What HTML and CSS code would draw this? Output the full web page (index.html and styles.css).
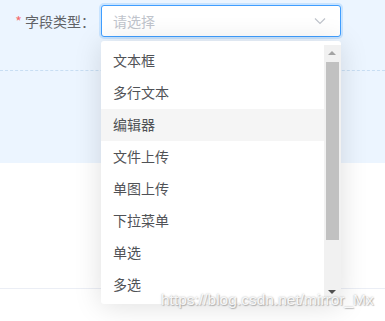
FILE: index.html
```html
<!DOCTYPE html>
<html lang="zh-CN">

<head>
    <meta charset="UTF-8" />
    <meta name="viewport" content="width=device-width, initial-scale=1.0" />
    <link rel="stylesheet" href="styles.css">
    <title>字段类型</title>
</head>

<body>
    <section class="panel">
        <div class="form-row">
            <label class="label"><span class="star">*</span> 字段类型：</label>
            <div class="select">
                <span class="placeholder">请选择</span>
                <svg class="arrow" width="12" height="8" viewBox="0 0 12 8">
                    <path d="M1 1.5 L6 6.5 L11 1.5" fill="none" stroke="#c0c4cc" stroke-width="1.2" />
                </svg>
            </div>
        </div>
        <hr class="dashed" />
    </section>
    <section class="body">
        <hr class="line" />
    </section>

    <div class="dropdown">
        <ul class="options">
            <li>文本框</li>
            <li>多行文本</li>
            <li class="hover">编辑器</li>
            <li>文件上传</li>
            <li>单图上传</li>
            <li>下拉菜单</li>
            <li>单选</li>
            <li>多选</li>
        </ul>
        <div class="scrollbar">
            <div class="btn-up"></div>
            <div class="thumb"></div>
            <div class="btn-down"></div>
        </div>
    </div>

    <div class="watermark">https://blog.csdn.net/mirror_Mx</div>
</body>

</html>
```

FILE: styles.css
```css
* {
    margin: 0;
    padding: 0;
    box-sizing: border-box;
}

body {
    width: 385px;
    height: 321px;
    overflow: hidden;
    position: relative;
    background-color: #ffffff;
    font-family: "Noto Sans CJK SC", "Liberation Sans", sans-serif;
    font-size: 14px;
}

section.panel {
    height: 163px;
    background-color: #ecf5ff;
    padding-top: 5px;
}

.form-row {
    display: flex;
    align-items: center;
}

.label {
    width: 101px;
    padding-right: 6px;
    text-align: right;
    color: #606266;
    line-height: 32px;
}

.star {
    color: #f56c6c;
}

.select {
    width: 240px;
    height: 32px;
    border: 1px solid #409eff;
    border-radius: 3px;
    background-color: #ffffff;
    box-shadow: 0 0 0 2px rgba(64, 158, 255, 0.2);
    display: flex;
    align-items: center;
    justify-content: space-between;
    padding: 0 14px 0 11px;
}

.placeholder {
    color: #c0c4cc;
}

hr.dashed {
    margin-top: 33px;
    border: none;
    border-top: 1px dashed #c8def3;
}

section.body {
    padding-top: 125px;
}

hr.line {
    border: none;
    border-top: 1px solid #ebeef5;
}

.dropdown {
    position: absolute;
    left: 101px;
    top: 41px;
    width: 240px;
    height: 263px;
    background-color: #ffffff;
    border-radius: 3px;
    box-shadow: 0 2px 28px rgba(0, 0, 0, 0.13);
    display: flex;
    padding-top: 4px;
    overflow: hidden;
}

.options {
    list-style: none;
    flex: 1;
}

.options li {
    height: 32px;
    line-height: 31px;
    padding-left: 12px;
    color: #505256;
}

.options li.hover {
    background-color: #f5f5f5;
}

.scrollbar {
    width: 17px;
    height: 256px;
    background-color: #f1f1f1;
    display: flex;
    flex-direction: column;
    align-items: center;
}

.btn-up,
.btn-down {
    height: 17px;
    width: 17px;
    position: relative;
}

.btn-up::after,
.btn-down::after {
    content: "";
    position: absolute;
    left: 4px;
    border-left: 4.5px solid transparent;
    border-right: 4.5px solid transparent;
}

.btn-up::after {
    top: 6px;
    border-bottom: 4.5px solid #a3a3a3;
}

.btn-down::after {
    top: 6px;
    border-top: 4.5px solid #505050;
}

.thumb {
    width: 13px;
    height: 178px;
    background-color: #c1c1c1;
}

.scrollbar .btn-down {
    margin-top: auto;
}

.watermark {
    position: absolute;
    left: 161px;
    top: 291px;
    font-family: "Liberation Sans", Arial, sans-serif;
    font-size: 15.5px;
    color: rgba(255, 255, 255, 0.9);
    text-shadow: 0 0 2px rgba(0, 0, 0, 0.35), 1px 1px 1px rgba(0, 0, 0, 0.2);
}
```
